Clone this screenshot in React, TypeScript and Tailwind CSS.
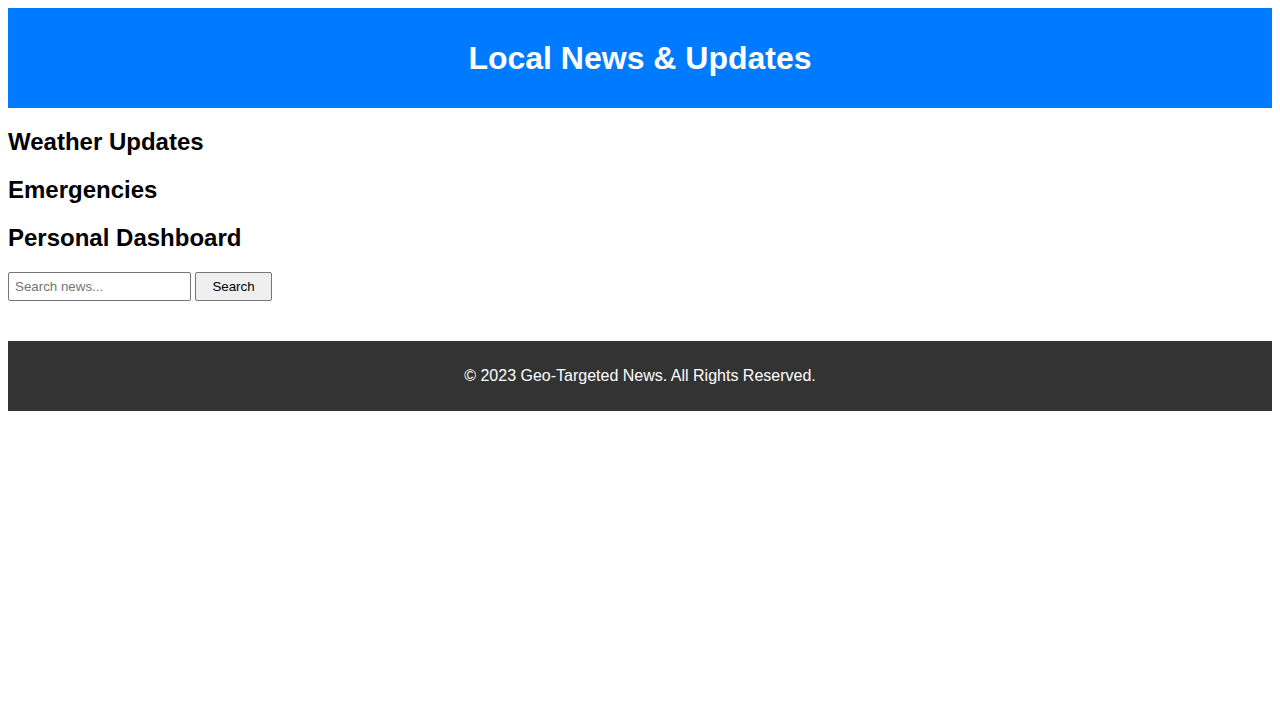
export default function App() {
  return (
    <div className="min-h-screen bg-white p-2 font-['Liberation_Sans',Arial,sans-serif] text-black">
      {/* header */}
      <header className="flex h-[100px] items-center justify-center bg-[#007bff] text-white">
        <h1 className="text-[32px] font-bold leading-[37px]">Local News &amp; Updates</h1>
      </header>

      <main className="flex flex-col">
        <h2 className="mt-5 text-2xl font-bold leading-[28px]">Weather Updates</h2>
        <h2 className="mt-5 text-2xl font-bold leading-[28px]">Emergencies</h2>
        <h2 className="mt-5 text-2xl font-bold leading-[28px]">Personal Dashboard</h2>

        {/* search */}
        <div className="mt-5 flex items-center gap-1">
          <input
            type="text"
            placeholder="Search news..."
            className="h-[29px] w-[183px] rounded-[2px] border border-[#767676] px-[6px] text-[13.33px] placeholder:text-[#757575] focus:outline-none"
          />
          <button className="h-[29px] w-[77px] rounded-[2px] border border-[#767676] bg-[#efefef] text-[13.33px] text-black">
            Search
          </button>
        </div>
      </main>

      <footer className="mt-10 flex h-[70px] items-center justify-center bg-[#333333] text-base text-white">
        <p>© 2023 Geo-Targeted News. All Rights Reserved.</p>
      </footer>
    </div>
  )
}
